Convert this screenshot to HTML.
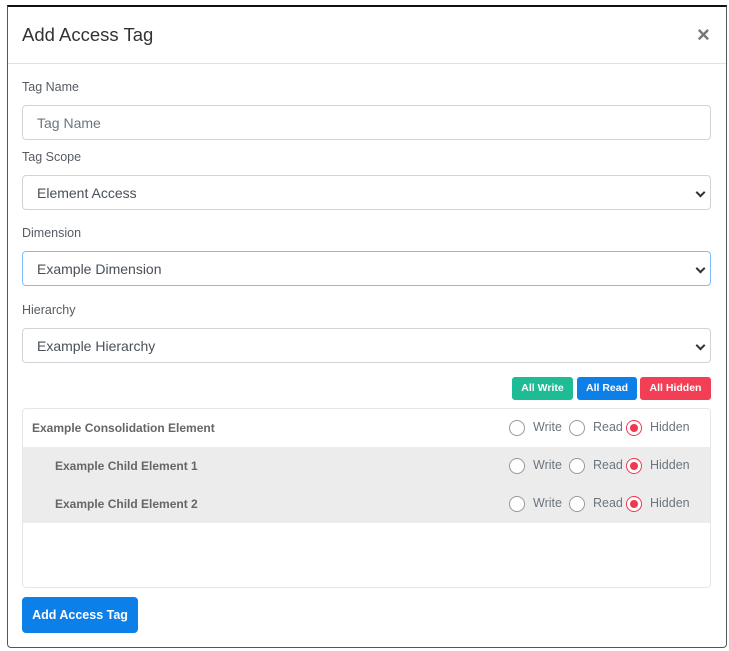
<!DOCTYPE html>
<html><head><style>
*{box-sizing:border-box;margin:0;padding:0}
body{width:729px;height:651px;background:#fff;font-family:"Liberation Sans",sans-serif;position:relative;overflow:hidden}
.m{position:absolute;left:7px;top:5px;width:720px;height:643px;border:1px solid #555;border-top:2px solid #111;border-radius:0 0 4px 4px;background:#fff}
.a{position:absolute}
.lbl{font-size:12.5px;color:#555c63;left:22px}
.in{left:22px;width:689px;height:35px;border:1px solid #ced4da;border-radius:4px;font-size:14px;color:#495057;padding:9px 14px;line-height:16px}
.chev{position:absolute;right:6px;top:13px;width:7px;height:7px;border-right:2px solid #333;border-bottom:2px solid #333;transform:rotate(45deg)}
.b{top:377px;height:23px;color:#fff;font-size:10.5px;font-weight:bold;text-align:center;line-height:23px;border-radius:3px}
.row{left:23px;width:687px;height:38px;font-size:12px;font-weight:bold;color:#666}
.r{position:absolute;top:11px;width:16px;height:16px;border:1px solid #999;border-radius:50%;background:#fff}
.r.on{border-color:#f0384f}
.r.on:after{content:"";position:absolute;left:3px;top:3px;width:8px;height:8px;border-radius:50%;background:#f0384f}
.t{position:absolute;top:11px;font-weight:normal;color:#6c757d;font-size:12.5px}
.n{position:absolute;top:12px;font-weight:bold;color:#666;font-size:12px}
</style></head><body>
<div class="m"></div>
<div class="a" style="left:22px;top:24px;font-size:18.5px;color:#333">Add Access Tag</div>
<div class="a" style="left:697px;top:22px;font-size:22px;color:#777;font-weight:bold">×</div>
<div class="a" style="left:8px;top:63px;width:718px;height:1px;background:#dee2e6"></div>
<div class="a lbl" style="top:80px">Tag Name</div>
<div class="a in" style="top:105px;color:#6c757d">Tag Name</div>
<div class="a lbl" style="top:150px">Tag Scope</div>
<div class="a in" style="top:175px">Element Access<span class="chev"></span></div>
<div class="a lbl" style="top:226px">Dimension</div>
<div class="a in" style="top:251px;border-color:#80bdff">Example Dimension<span class="chev"></span></div>
<div class="a lbl" style="top:303px">Hierarchy</div>
<div class="a in" style="top:328px">Example Hierarchy<span class="chev"></span></div>
<div class="a b" style="left:512px;width:61px;background:#1ebc94">All Write</div>
<div class="a b" style="left:577px;width:60px;background:#0d7fe8">All Read</div>
<div class="a b" style="left:640px;width:71px;background:#f23f55">All Hidden</div>
<div class="a" style="left:22px;top:408px;width:689px;height:180px;border:1px solid #e6e6e6;border-radius:4px"></div>
<div class="a row" style="top:409px"><span class="n" style="left:9px">Example Consolidation Element</span>
<span class="r" style="left:486px"></span><span class="t" style="left:510px">Write</span><span class="r" style="left:546px"></span><span class="t" style="left:570px">Read</span><span class="r on" style="left:603px"></span><span class="t" style="left:627px">Hidden</span></div>
<div class="a row" style="top:447px;background:#ececec"><span class="n" style="left:32px">Example Child Element 1</span>
<span class="r" style="left:486px"></span><span class="t" style="left:510px">Write</span><span class="r" style="left:546px"></span><span class="t" style="left:570px">Read</span><span class="r on" style="left:603px"></span><span class="t" style="left:627px">Hidden</span></div>
<div class="a row" style="top:485px;background:#ececec"><span class="n" style="left:32px">Example Child Element 2</span>
<span class="r" style="left:486px"></span><span class="t" style="left:510px">Write</span><span class="r" style="left:546px"></span><span class="t" style="left:570px">Read</span><span class="r on" style="left:603px"></span><span class="t" style="left:627px">Hidden</span></div>
<div class="a" style="left:22px;top:597px;width:116px;height:36px;background:#0d7fe8;border-radius:4px;color:#fff;font-size:12.5px;font-weight:bold;text-align:center;line-height:36px">Add Access Tag</div>
</body></html>
